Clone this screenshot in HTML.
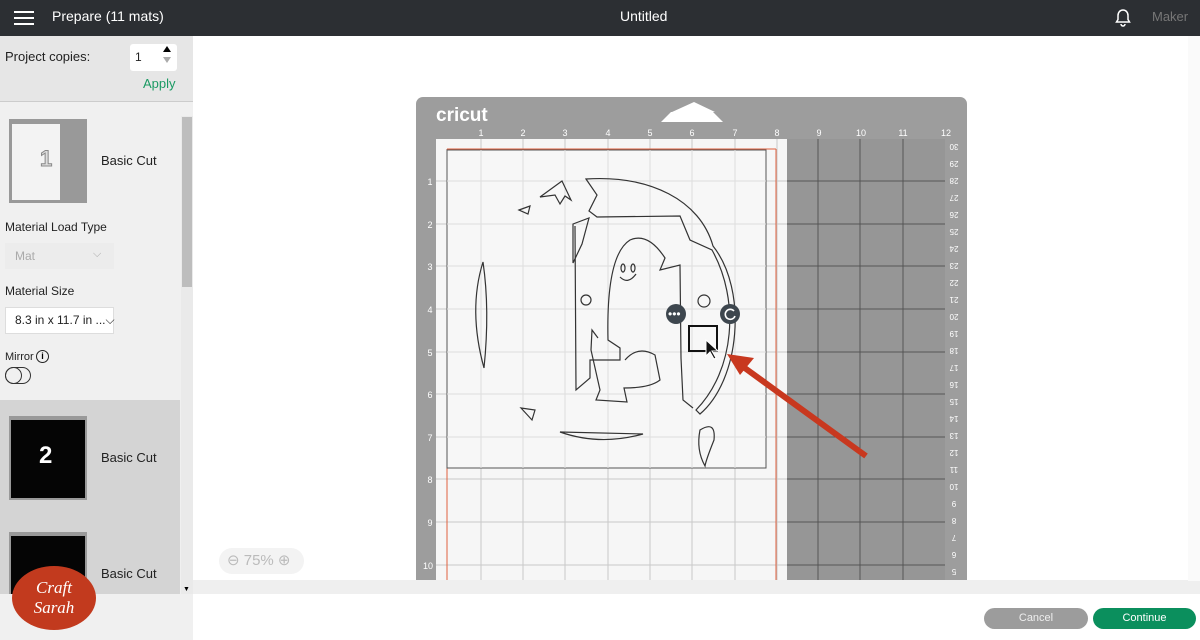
<!DOCTYPE html>
<html><head><meta charset="utf-8"><style>
*{margin:0;padding:0;box-sizing:border-box}
body{width:1200px;height:640px;overflow:hidden;background:#fff;font-family:"Liberation Sans",sans-serif;position:relative}
.top{position:absolute;left:0;top:0;width:1200px;height:36px;background:#2c2f33;color:#fff}
.abs{position:absolute}
.left{position:absolute;left:0;top:36px;width:193px;height:604px;background:#f0f0f0}
.t{font-size:12px;color:#222}
</style></head><body>
<div class="top">
  <div class="abs" style="left:14px;top:11px;width:20px;height:2px;background:#fff;box-shadow:0 6px 0 #fff,0 12px 0 #fff"></div>
  <div class="abs" style="left:52px;top:8px;font-size:14px">Prepare (11 mats)</div>
  <div class="abs" style="left:620px;top:8px;font-size:14px">Untitled</div>
  <svg class="abs" style="left:1114px;top:8px" width="18" height="20" viewBox="0 0 18 20"><path d="M9 2c-3 0-5 2.5-5 5.5v4L2.5 14h13L14 11.5v-4C14 4.5 12 2 9 2z M7 16a2 2 0 0 0 4 0" fill="none" stroke="#fff" stroke-width="1.5"/></svg>
  <div class="abs" style="left:1152px;top:9px;font-size:13px;color:#777">Maker</div>
</div>
<div class="left">
  <div class="abs" style="left:0;top:0;width:193px;height:66px;background:#e6e6e6;border-bottom:1px solid #ccc"></div>
  <div class="abs" style="left:5px;top:13px;font-size:13px;color:#222">Project copies:</div>
  <div class="abs" style="left:130px;top:8px;width:47px;height:27px;background:#fff;border-radius:3px"></div>
  <div class="abs t" style="left:135px;top:14px">1</div>
  <div class="abs" style="left:163px;top:10px;width:0;height:0;border-left:4px solid transparent;border-right:4px solid transparent;border-bottom:6px solid #000"></div>
  <div class="abs" style="left:163px;top:21px;width:0;height:0;border-left:4px solid transparent;border-right:4px solid transparent;border-top:6px solid #aaa"></div>
  <div class="abs" style="left:143px;top:40px;font-size:13px;color:#1a9a63">Apply</div>
  <div class="abs" style="left:181px;top:80px;width:12px;height:478px;background:#eaeaea"></div>
  <div class="abs" style="left:182px;top:81px;width:10px;height:170px;background:#bdbdbd"></div>
  <div class="abs" style="left:9px;top:83px;width:78px;height:84px;background:#999"></div>
  <div class="abs" style="left:12px;top:88px;width:48px;height:76px;background:#f3f3f3"></div>
  <div class="abs" style="left:40px;top:110px;font-size:22px;color:#ddd;font-weight:bold;-webkit-text-stroke:1px #888">1</div>
  <div class="abs t" style="left:101px;top:117px;font-size:13px">Basic Cut</div>
  <div class="abs t" style="left:5px;top:184px">Material Load Type</div>
  <div class="abs" style="left:5px;top:207px;width:109px;height:26px;background:#ececec"></div>
  <div class="abs" style="left:15px;top:213px;font-size:12px;color:#aaa">Mat</div>
  <div class="abs" style="left:93px;top:212px;font-size:11px;color:#aaa">⌵</div>
  <div class="abs t" style="left:5px;top:248px">Material Size</div>
  <div class="abs" style="left:5px;top:271px;width:109px;height:27px;background:#fff;border:1px solid #ddd"></div>
  <div class="abs t" style="left:15px;top:277px">8.3 in x 11.7 in ...⌵</div>
  <div class="abs" style="left:5px;top:315px;font-size:11px;color:#222">Mirror</div>
  <div class="abs" style="left:36px;top:314px;width:13px;height:13px;border:1.5px solid #222;border-radius:50%;font-size:9px;text-align:center;line-height:10px;font-weight:bold">i</div>
  <div class="abs" style="left:5px;top:331px;width:26px;height:17px;border:1.5px solid #333;border-radius:9px"></div>
  <div class="abs" style="left:5px;top:331px;width:17px;height:17px;border:1.5px solid #333;border-radius:50%"></div>
  <div class="abs" style="left:0;top:364px;width:180px;height:194px;background:#d4d4d4"></div>
  <div class="abs" style="left:9px;top:380px;width:78px;height:84px;background:#999"></div>
  <div class="abs" style="left:11px;top:384px;width:74px;height:78px;background:#050505"></div>
  <div class="abs" style="left:39px;top:406px;font-size:24px;color:#fff;font-weight:bold">2</div>
  <div class="abs t" style="left:101px;top:414px;font-size:13px">Basic Cut</div>
  <div class="abs" style="left:9px;top:496px;width:78px;height:62px;background:#999"></div>
  <div class="abs" style="left:11px;top:500px;width:74px;height:58px;background:#050505"></div>
  <div class="abs t" style="left:101px;top:530px;font-size:13px">Basic Cut</div>
  <div class="abs" style="left:12px;top:530px;width:84px;height:64px;background:#c23a1e;border-radius:50%;color:#fff;font-family:'Liberation Serif',serif;font-style:italic;font-size:17px;text-align:center;line-height:20px;padding-top:12px">Craft<br>Sarah</div>
  <div class="abs" style="left:183px;top:550px;font-size:7px">▼</div>
</div>
<div class="abs" style="left:219px;top:548px;width:85px;height:26px;background:#f3f3f3;border-radius:13px;color:#bbb;font-size:15px;line-height:26px;padding-left:8px">⊖ 75% ⊕</div>
<div class="abs" style="left:193px;top:580px;width:1007px;height:14px;background:#efefef"></div>
<div class="abs" style="left:1188px;top:36px;width:12px;height:545px;background:#fafafa"></div>
<div class="abs" style="left:984px;top:608px;width:104px;height:21px;background:#9c9c9c;border-radius:11px;color:#eee;font-size:11px;text-align:center;line-height:21px">Cancel</div>
<div class="abs" style="left:1093px;top:608px;width:103px;height:21px;background:#0b8f5d;border-radius:11px;color:#fff;font-size:11px;text-align:center;line-height:21px">Continue</div>
<svg class="abs" style="left:0;top:0" width="1188" height="580" viewBox="0 0 1188 580">
  <path d="M416 104a7 7 0 0 1 7-7h537a7 7 0 0 1 7 7V580H416z" fill="#9d9d9d"/>
  <path d="M661 122 l10-10 h42 l10 10 z M672 112 l22-10 l21 10z" fill="#fff"/>
  <text x="436" y="121" fill="#fff" font-size="19" font-weight="bold" font-family="Liberation Sans">cricut</text>
  <rect x="436" y="139" width="351" height="441" fill="#f6f6f6"/>
  <rect x="787" y="139" width="158" height="441" fill="#969696"/>
  <g stroke="#555" stroke-width="1">
    <line x1="818" y1="139" x2="818" y2="580"/><line x1="860" y1="139" x2="860" y2="580"/><line x1="903" y1="139" x2="903" y2="580"/>
    <line x1="787" y1="181" x2="945" y2="181"/><line x1="787" y1="224" x2="945" y2="224"/><line x1="787" y1="266" x2="945" y2="266"/><line x1="787" y1="309" x2="945" y2="309"/><line x1="787" y1="352" x2="945" y2="352"/><line x1="787" y1="394" x2="945" y2="394"/><line x1="787" y1="437" x2="945" y2="437"/><line x1="787" y1="479" x2="945" y2="479"/><line x1="787" y1="522" x2="945" y2="522"/><line x1="787" y1="565" x2="945" y2="565"/>
  </g>
  <g stroke="#c8c8c8" stroke-width="1">
    <line x1="481" y1="139" x2="481" y2="580"/><line x1="523" y1="139" x2="523" y2="580"/><line x1="565" y1="139" x2="565" y2="580"/><line x1="608" y1="139" x2="608" y2="580"/><line x1="650" y1="139" x2="650" y2="580"/><line x1="692" y1="139" x2="692" y2="580"/><line x1="735" y1="139" x2="735" y2="580"/><line x1="777" y1="139" x2="777" y2="580"/>
    <line x1="436" y1="181" x2="787" y2="181"/><line x1="436" y1="224" x2="787" y2="224"/><line x1="436" y1="266" x2="787" y2="266"/><line x1="436" y1="309" x2="787" y2="309"/><line x1="436" y1="352" x2="787" y2="352"/><line x1="436" y1="394" x2="787" y2="394"/><line x1="436" y1="437" x2="787" y2="437"/><line x1="436" y1="479" x2="787" y2="479"/><line x1="436" y1="522" x2="787" y2="522"/><line x1="436" y1="565" x2="787" y2="565"/>
  </g>
  <g stroke="#e0603e" stroke-width="1"><line x1="447" y1="149" x2="447" y2="580"/><line x1="776" y1="149" x2="776" y2="580"/><line x1="447" y1="149" x2="776" y2="149"/></g>
  <rect x="447" y="150" width="319" height="318" fill="#f7f7f7" stroke="#555"/>
  <g stroke="#ddd"><line x1="481" y1="150" x2="481" y2="468"/><line x1="523" y1="150" x2="523" y2="468"/><line x1="565" y1="150" x2="565" y2="468"/><line x1="608" y1="150" x2="608" y2="468"/><line x1="650" y1="150" x2="650" y2="468"/><line x1="692" y1="150" x2="692" y2="468"/><line x1="735" y1="150" x2="735" y2="468"/><line x1="447" y1="181" x2="766" y2="181"/><line x1="447" y1="224" x2="766" y2="224"/><line x1="447" y1="266" x2="766" y2="266"/><line x1="447" y1="309" x2="766" y2="309"/><line x1="447" y1="352" x2="766" y2="352"/><line x1="447" y1="394" x2="766" y2="394"/><line x1="447" y1="437" x2="766" y2="437"/></g>
  <g fill="none" stroke="#333" stroke-width="1.2">
    <path d="M586 179 C650 175 700 200 713 246 C748 290 740 380 700 414 L696 410 C735 370 740 300 712 250 L690 240 L680 216 L597 217 L589 211 L597 195 Z"/>
    <path d="M562 181 L540 197 L555 195 L560 204 L565 196 L571 200 Z"/>
    <path d="M519 210 L530 206 L528 214 Z M521 408 L535 410 L532 420 Z"/>
    <path d="M483 262 Q468 310 484 368 Q490 310 483 262 Z"/>
    <path d="M560 432 Q600 446 643 434 Z"/>
    <path d="M573 224 L589 218 L582 244 L573 263 Z"/>
    <path d="M575 226 L576 390 L590 378 L590 360 L620 360 L620 348 L608 340 Q606 255 630 240 Q648 232 665 258 L660 270 L680 265 L681 358 L683 400 L693 408"/>
    <ellipse cx="623" cy="268" rx="2" ry="4"/><ellipse cx="633" cy="268" rx="2" ry="4"/><path d="M620 277 Q628 285 636 274"/>
    <path d="M598 338 L592 330 L591 350 Q596 372 600 390 L596 400 L627 402 L624 388 Q650 388 660 380 L655 355 Q638 345 625 360"/>
    <circle cx="586" cy="300" r="5"/><circle cx="704" cy="301" r="6"/>
    <path d="M700 430 Q716 420 714 440 Q706 460 705 466 Q696 450 700 430Z"/>
  </g>
  <circle cx="676" cy="314" r="10" fill="#3d464e"/><text x="668" y="318" fill="#fff" font-size="12">•••</text>
  <circle cx="730" cy="314" r="10" fill="#3d464e"/><path d="M734 311 a5 5 0 1 0 1 5" fill="none" stroke="#fff" stroke-width="1.6"/>
  <rect x="689" y="326" width="28" height="25" fill="none" stroke="#111" stroke-width="2"/>
  <path d="M706 340 l0 16 l4 -4 l4 7 l2 -1 l-4 -7 l6 0 z" fill="#111" stroke="#fff"/>
  <line x1="866" y1="456" x2="742" y2="366" stroke="#c8381f" stroke-width="6"/>
  <path d="M727 354 l27 4 l-14 17 z" fill="#c8381f"/>
  <g fill="#fff" font-size="9" font-family="Liberation Sans" text-anchor="middle">
    <text x="481" y="136">1</text><text x="523" y="136">2</text><text x="565" y="136">3</text><text x="608" y="136">4</text><text x="650" y="136">5</text><text x="692" y="136">6</text><text x="735" y="136">7</text><text x="777" y="136">8</text><text x="819" y="136">9</text><text x="861" y="136">10</text><text x="903" y="136">11</text><text x="946" y="136">12</text>
    <text x="430" y="185">1</text><text x="430" y="228">2</text><text x="430" y="270">3</text><text x="430" y="313">4</text><text x="430" y="356">5</text><text x="430" y="398">6</text><text x="430" y="441">7</text><text x="430" y="483">8</text><text x="430" y="526">9</text><text x="428" y="569">10</text>
  </g>
  <g fill="#fff" font-size="8" font-family="Liberation Sans" text-anchor="middle">
    <text x="954" y="150" transform="rotate(180 954 147)">30</text>
    <text x="954" y="167" transform="rotate(180 954 164)">29</text>
    <text x="954" y="184" transform="rotate(180 954 181)">28</text>
    <text x="954" y="201" transform="rotate(180 954 198)">27</text>
    <text x="954" y="218" transform="rotate(180 954 215)">26</text>
    <text x="954" y="235" transform="rotate(180 954 232)">25</text>
    <text x="954" y="252" transform="rotate(180 954 249)">24</text>
    <text x="954" y="269" transform="rotate(180 954 266)">23</text>
    <text x="954" y="286" transform="rotate(180 954 283)">22</text>
    <text x="954" y="303" transform="rotate(180 954 300)">21</text>
    <text x="954" y="320" transform="rotate(180 954 317)">20</text>
    <text x="954" y="337" transform="rotate(180 954 334)">19</text>
    <text x="954" y="354" transform="rotate(180 954 351)">18</text>
    <text x="954" y="371" transform="rotate(180 954 368)">17</text>
    <text x="954" y="388" transform="rotate(180 954 385)">16</text>
    <text x="954" y="405" transform="rotate(180 954 402)">15</text>
    <text x="954" y="422" transform="rotate(180 954 419)">14</text>
    <text x="954" y="439" transform="rotate(180 954 436)">13</text>
    <text x="954" y="456" transform="rotate(180 954 453)">12</text>
    <text x="954" y="473" transform="rotate(180 954 470)">11</text>
    <text x="954" y="490" transform="rotate(180 954 487)">10</text>
    <text x="954" y="507" transform="rotate(180 954 504)">9</text>
    <text x="954" y="524" transform="rotate(180 954 521)">8</text>
    <text x="954" y="541" transform="rotate(180 954 538)">7</text>
    <text x="954" y="558" transform="rotate(180 954 555)">6</text>
    <text x="954" y="575" transform="rotate(180 954 572)">5</text>
  </g>
</svg>
</body></html>
